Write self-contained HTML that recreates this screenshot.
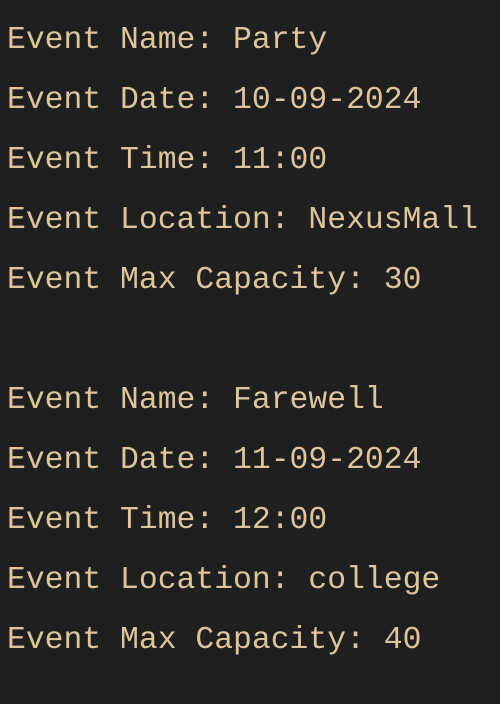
<!DOCTYPE html>
<html><head><style>
html,body{margin:0;padding:0;background:#1f1f1f;width:500px;height:704px;overflow:hidden}
pre{margin:0;padding:11px 0 0 7px;font-family:"Liberation Mono",monospace;font-size:31.4px;line-height:60px;color:#dcc49c;white-space:pre}
</style></head><body><pre>Event Name: Party
Event Date: 10-09-2024
Event Time: 11:00
Event Location: NexusMall
Event Max Capacity: 30

Event Name: Farewell
Event Date: 11-09-2024
Event Time: 12:00
Event Location: college
Event Max Capacity: 40</pre></body></html>
